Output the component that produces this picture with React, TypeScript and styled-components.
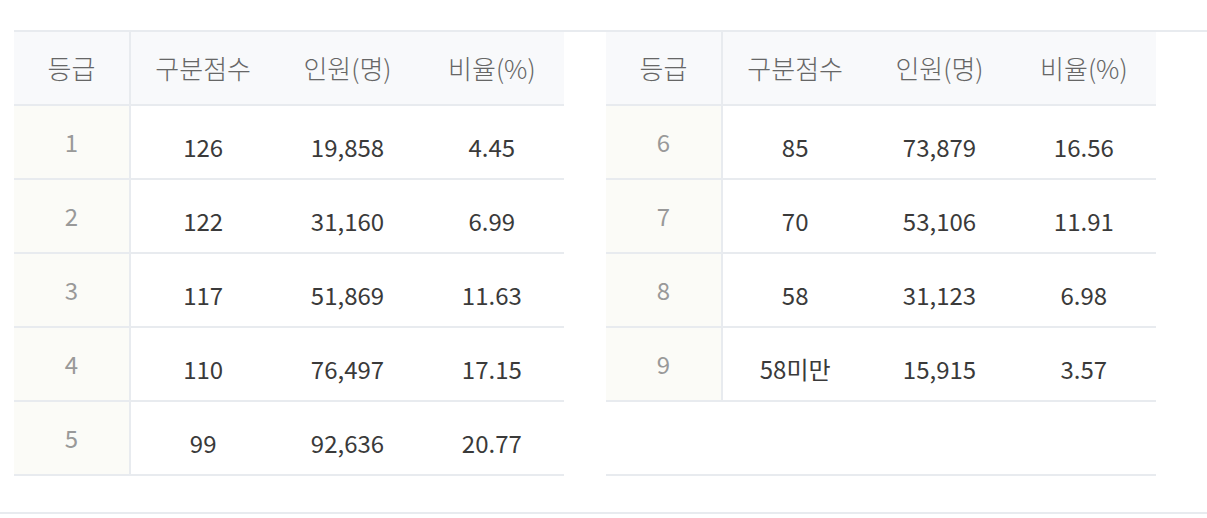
import React from 'react';
import styled, { createGlobalStyle } from 'styled-components';

const GlobalStyle = createGlobalStyle`
  body {
    margin: 0;
    background: #fff;
    font-family: "Noto Sans CJK KR", "Noto Sans", sans-serif;
  }
`;

const Section = styled.section`
  padding-top: 30px;
  padding-bottom: 36px;
  border-bottom: 2px solid #e8ebef;
`;

const Board = styled.div`
  margin-left: 14px;
  border-top: 2px solid #e8ebef;
  display: flex;
  gap: 42px;
`;

const Table = styled.div`
  width: 550px;
  display: grid;
  grid-template-columns: 117px repeat(3, 1fr);
  grid-auto-rows: 74px;
`;

const HeadCell = styled.div<{ $first?: boolean }>`
  display: flex;
  align-items: center;
  justify-content: center;
  background: #f8f9fb;
  color: #666;
  font-size: 26px;
  font-weight: 300;
  border-bottom: 2px solid #e8ebef;
  border-right: ${(p) => (p.$first ? '2px solid #e8ebef' : 'none')};
  padding-bottom: 2px;
`;

const GradeCell = styled.div`
  display: flex;
  align-items: center;
  justify-content: center;
  background: #fbfbf7;
  color: #999;
  font-size: 24px;
  border-bottom: 2px solid #e8ebef;
  border-right: 2px solid #e8ebef;
  padding-bottom: 2px;
`;

const Cell = styled.div`
  display: flex;
  align-items: center;
  justify-content: center;
  color: #3a3a3a;
  font-size: 24px;
  border-bottom: 2px solid #e8ebef;
  padding-top: 8px;
`;

const EmptyRow = styled.div`
  grid-column: 1 / -1;
  border-bottom: 2px solid #e8ebef;
`;

type Row = [string, string, string, string];

const left: Row[] = [
  ['1', '126', '19,858', '4.45'],
  ['2', '122', '31,160', '6.99'],
  ['3', '117', '51,869', '11.63'],
  ['4', '110', '76,497', '17.15'],
  ['5', '99', '92,636', '20.77'],
];

const right: Row[] = [
  ['6', '85', '73,879', '16.56'],
  ['7', '70', '53,106', '11.91'],
  ['8', '58', '31,123', '6.98'],
  ['9', '58미만', '15,915', '3.57'],
];

const GradeTable = ({ rows }: { rows: Row[] }) => (
  <Table>
    <HeadCell $first>등급</HeadCell>
    <HeadCell>구분점수</HeadCell>
    <HeadCell>인원(명)</HeadCell>
    <HeadCell>비율(%)</HeadCell>
    {rows.map((r) => (
      <React.Fragment key={r[0]}>
        <GradeCell>{r[0]}</GradeCell>
        <Cell>{r[1]}</Cell>
        <Cell>{r[2]}</Cell>
        <Cell>{r[3]}</Cell>
      </React.Fragment>
    ))}
    {rows.length < 5 && <EmptyRow />}
  </Table>
);

const App = () => (
  <>
    <GlobalStyle />
    <Section>
      <Board>
        <GradeTable rows={left} />
        <GradeTable rows={right} />
      </Board>
    </Section>
  </>
);

export default App;
